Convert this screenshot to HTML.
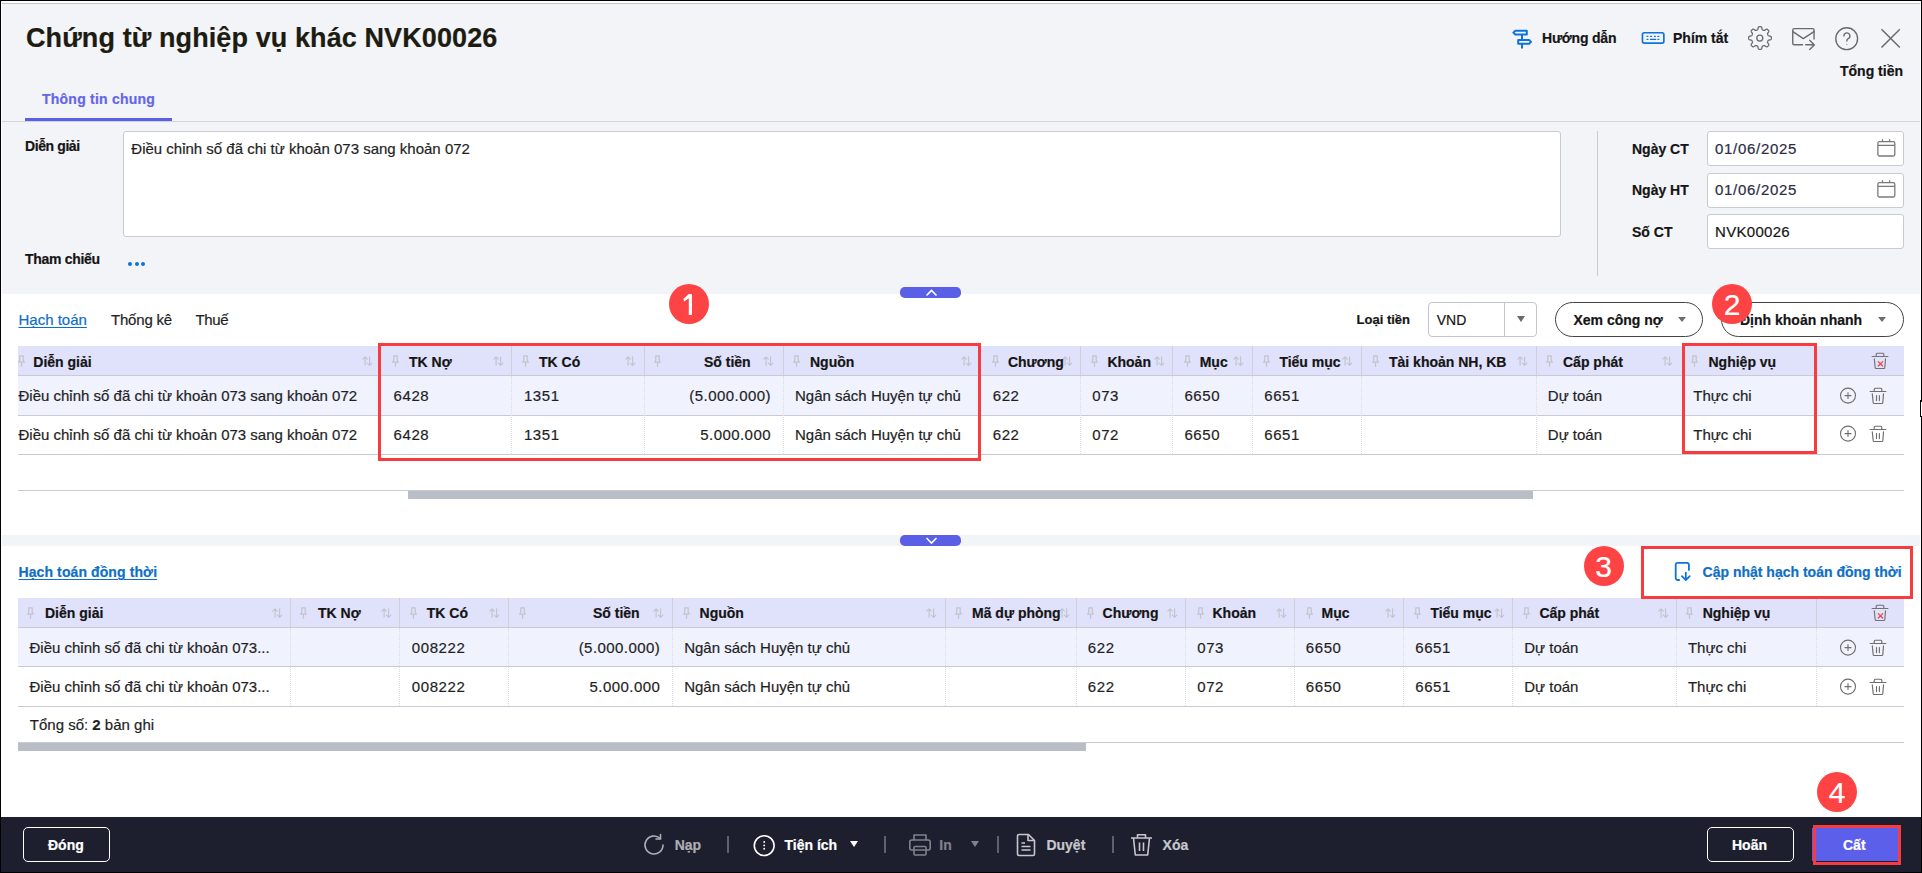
<!DOCTYPE html>
<html><head><meta charset="utf-8"><style>
html,body{margin:0;padding:0;width:1922px;height:873px;overflow:hidden;position:relative;font-family:"Liberation Sans", sans-serif;}
.t{position:absolute;white-space:nowrap;line-height:1;font-family:"Liberation Sans", sans-serif;-webkit-text-stroke:0.2px currentColor;}
svg{display:block}
</style></head><body>
<div style="position:absolute;left:0px;top:0px;width:1922px;height:873px;background:#fff"></div><div style="position:absolute;left:2px;top:4px;width:1918px;height:290px;background:#f3f4f8"></div><div style="position:absolute;left:1px;top:3px;width:1920px;height:1px;background:#c8c8c8"></div><div style="position:absolute;left:2px;top:121px;width:1918px;height:1px;background:#d3d4dc"></div><div style="position:absolute;left:2px;top:535px;width:1918px;height:11px;background:#f3f4f8"></div><div style="position:absolute;left:0px;top:817px;width:1922px;height:56px;background:#1d1f2e"></div><div style="position:absolute;left:0px;top:0px;width:1922px;height:1px;background:#000"></div><div style="position:absolute;left:0px;top:0px;width:1px;height:873px;background:#000"></div><div style="position:absolute;left:1921px;top:0px;width:1px;height:873px;background:#000"></div><div style="position:absolute;left:0px;top:872px;width:1922px;height:1px;background:#000"></div><div class="t" style="left:26.0px;top:25.1px;font-size:27px;font-weight:bold;color:#1c1c12;letter-spacing:0.1px;">Chứng từ nghiệp vụ khác NVK00026</div><svg style="position:absolute;left:1511px;top:28px" width="24" height="22" viewBox="0 0 24 22" fill="none" stroke="#0f74d9" stroke-width="2" stroke-linejoin="round">
<path d="M4.3 2.8H15.8V6.5H4.3L2.4 4.65z"/><path d="M7.2 11.9H18.1L20 13.85 18.1 15.8H7.2z"/><path d="M11 6.5v5.4M11 15.8v4.7"/></svg><div class="t" style="left:1542.0px;top:30.9px;font-size:14px;font-weight:bold;color:#151515;letter-spacing:-0.2px;">Hướng dẫn</div><svg style="position:absolute;left:1640px;top:30px" width="27" height="16" viewBox="0 0 27 16" fill="none" stroke="#0f74d9" stroke-width="1.7" stroke-linecap="round">
<rect x="2.45" y="2.75" width="21.4" height="10.3" rx="1.8"/><path d="M7.1 6.4h.8M10.7 6.4h.8M14.5 6.4h.8M18 6.4h.8M7.1 9.4h.8M18 9.4h.8M10.5 9.4h5.2" stroke-width="1.3"/></svg><div class="t" style="left:1673.0px;top:30.9px;font-size:14px;font-weight:bold;color:#151515;">Phím tắt</div><svg style="position:absolute;left:1747.5px;top:25.5px" width="24" height="24" viewBox="0 0 24 24" fill="none" stroke="#6b6b6b" stroke-width="1.3" stroke-linejoin="round">
<path d="M12.00 0.65 L12.22 0.65 L12.45 0.67 L12.67 0.69 L12.89 0.73 L13.10 0.79 L13.31 0.90 L13.51 1.07 L13.69 1.35 L13.83 1.77 L13.93 2.29 L14.02 2.81 L14.11 3.23 L14.21 3.52 L14.34 3.70 L14.48 3.83 L14.63 3.92 L14.78 4.00 L14.93 4.06 L15.08 4.13 L15.23 4.19 L15.39 4.26 L15.54 4.32 L15.70 4.38 L15.86 4.43 L16.03 4.47 L16.21 4.48 L16.43 4.43 L16.71 4.31 L17.07 4.08 L17.50 3.77 L17.94 3.47 L18.34 3.28 L18.66 3.20 L18.92 3.22 L19.14 3.30 L19.34 3.40 L19.52 3.53 L19.70 3.67 L19.87 3.82 L20.03 3.97 L20.18 4.13 L20.33 4.30 L20.47 4.48 L20.60 4.66 L20.70 4.86 L20.78 5.08 L20.80 5.34 L20.72 5.66 L20.53 6.06 L20.23 6.50 L19.92 6.93 L19.69 7.29 L19.57 7.57 L19.52 7.79 L19.53 7.97 L19.57 8.14 L19.62 8.30 L19.68 8.46 L19.74 8.61 L19.81 8.77 L19.87 8.92 L19.94 9.07 L20.00 9.22 L20.08 9.37 L20.17 9.52 L20.30 9.66 L20.48 9.79 L20.77 9.89 L21.19 9.98 L21.71 10.07 L22.23 10.17 L22.65 10.31 L22.93 10.49 L23.10 10.69 L23.21 10.90 L23.27 11.11 L23.31 11.33 L23.33 11.55 L23.35 11.78 L23.35 12.00 L23.35 12.22 L23.33 12.45 L23.31 12.67 L23.27 12.89 L23.21 13.10 L23.10 13.31 L22.93 13.51 L22.65 13.69 L22.23 13.83 L21.71 13.93 L21.19 14.02 L20.77 14.11 L20.48 14.21 L20.30 14.34 L20.17 14.48 L20.08 14.63 L20.00 14.78 L19.94 14.93 L19.87 15.08 L19.81 15.23 L19.74 15.39 L19.68 15.54 L19.62 15.70 L19.57 15.86 L19.53 16.03 L19.52 16.21 L19.57 16.43 L19.69 16.71 L19.92 17.07 L20.23 17.50 L20.53 17.94 L20.72 18.34 L20.80 18.66 L20.78 18.92 L20.70 19.14 L20.60 19.34 L20.47 19.52 L20.33 19.70 L20.18 19.87 L20.03 20.03 L19.87 20.18 L19.70 20.33 L19.52 20.47 L19.34 20.60 L19.14 20.70 L18.92 20.78 L18.66 20.80 L18.34 20.72 L17.94 20.53 L17.50 20.23 L17.07 19.92 L16.71 19.69 L16.43 19.57 L16.21 19.52 L16.03 19.53 L15.86 19.57 L15.70 19.62 L15.54 19.68 L15.39 19.74 L15.23 19.81 L15.08 19.87 L14.93 19.94 L14.78 20.00 L14.63 20.08 L14.48 20.17 L14.34 20.30 L14.21 20.48 L14.11 20.77 L14.02 21.19 L13.93 21.71 L13.83 22.23 L13.69 22.65 L13.51 22.93 L13.31 23.10 L13.10 23.21 L12.89 23.27 L12.67 23.31 L12.45 23.33 L12.22 23.35 L12.00 23.35 L11.78 23.35 L11.55 23.33 L11.33 23.31 L11.11 23.27 L10.90 23.21 L10.69 23.10 L10.49 22.93 L10.31 22.65 L10.17 22.23 L10.07 21.71 L9.98 21.19 L9.89 20.77 L9.79 20.48 L9.66 20.30 L9.52 20.17 L9.37 20.08 L9.22 20.00 L9.07 19.94 L8.92 19.87 L8.77 19.81 L8.61 19.74 L8.46 19.68 L8.30 19.62 L8.14 19.57 L7.97 19.53 L7.79 19.52 L7.57 19.57 L7.29 19.69 L6.93 19.92 L6.50 20.23 L6.06 20.53 L5.66 20.72 L5.34 20.80 L5.08 20.78 L4.86 20.70 L4.66 20.60 L4.48 20.47 L4.30 20.33 L4.13 20.18 L3.97 20.03 L3.82 19.87 L3.67 19.70 L3.53 19.52 L3.40 19.34 L3.30 19.14 L3.22 18.92 L3.20 18.66 L3.28 18.34 L3.47 17.94 L3.77 17.50 L4.08 17.07 L4.31 16.71 L4.43 16.43 L4.48 16.21 L4.47 16.03 L4.43 15.86 L4.38 15.70 L4.32 15.54 L4.26 15.39 L4.19 15.23 L4.13 15.08 L4.06 14.93 L4.00 14.78 L3.92 14.63 L3.83 14.48 L3.70 14.34 L3.52 14.21 L3.23 14.11 L2.81 14.02 L2.29 13.93 L1.77 13.83 L1.35 13.69 L1.07 13.51 L0.90 13.31 L0.79 13.10 L0.73 12.89 L0.69 12.67 L0.67 12.45 L0.65 12.22 L0.65 12.00 L0.65 11.78 L0.67 11.55 L0.69 11.33 L0.73 11.11 L0.79 10.90 L0.90 10.69 L1.07 10.49 L1.35 10.31 L1.77 10.17 L2.29 10.07 L2.81 9.98 L3.23 9.89 L3.52 9.79 L3.70 9.66 L3.83 9.52 L3.92 9.37 L4.00 9.22 L4.06 9.07 L4.13 8.92 L4.19 8.77 L4.26 8.61 L4.32 8.46 L4.38 8.30 L4.43 8.14 L4.47 7.97 L4.48 7.79 L4.43 7.57 L4.31 7.29 L4.08 6.93 L3.77 6.50 L3.47 6.06 L3.28 5.66 L3.20 5.34 L3.22 5.08 L3.30 4.86 L3.40 4.66 L3.53 4.48 L3.67 4.30 L3.82 4.13 L3.97 3.97 L4.13 3.82 L4.30 3.67 L4.48 3.53 L4.66 3.40 L4.86 3.30 L5.08 3.22 L5.34 3.20 L5.66 3.28 L6.06 3.47 L6.50 3.77 L6.93 4.08 L7.29 4.31 L7.57 4.43 L7.79 4.48 L7.97 4.47 L8.14 4.43 L8.30 4.38 L8.46 4.32 L8.61 4.26 L8.77 4.19 L8.92 4.13 L9.07 4.06 L9.22 4.00 L9.37 3.92 L9.52 3.83 L9.66 3.70 L9.79 3.52 L9.89 3.23 L9.98 2.81 L10.07 2.29 L10.17 1.77 L10.31 1.35 L10.49 1.07 L10.69 0.90 L10.90 0.79 L11.11 0.73 L11.33 0.69 L11.55 0.67 L11.78 0.65Z"/><circle cx="11.8" cy="12.1" r="3"/></svg><svg style="position:absolute;left:1790px;top:26px" width="27" height="26" viewBox="0 0 27 26" fill="none" stroke="#6b6b6b" stroke-width="1.4" stroke-linejoin="round" stroke-linecap="round">
<path d="M12.5 18.75H4.25a1.5 1.5 0 0 1-1.5-1.5V4.15a1.5 1.5 0 0 1 1.5-1.5H22.55a1.5 1.5 0 0 1 1.5 1.5V13"/><path d="M2.9 5.6L13.3 12.6 24 5.6"/><path d="M15.7 18.75H24.3M19.7 14.3L24.3 18.9 19.7 23.5"/></svg><svg style="position:absolute;left:1834px;top:26px" width="25" height="25" viewBox="0 0 25 25" fill="none" stroke="#6b6b6b" stroke-width="1.4" stroke-linecap="round">
<circle cx="12.7" cy="12.7" r="10.9"/><path d="M9.9 9.9a3 3 0 1 1 4.3 2.7c-.8.4-1.3 1-1.3 1.9v.5"/><circle cx="12.9" cy="18.3" r=".55" fill="#6b6b6b" stroke="none"/></svg><svg style="position:absolute;left:1879px;top:27px" width="23" height="23" viewBox="0 0 23 23" fill="none" stroke="#6b6b6b" stroke-width="1.5">
<path d="M2.5 2.2l18.3 18.3M20.8 2.2L2.5 20.5"/></svg><div class="t" style="left:1840.0px;top:64.1px;font-size:14px;font-weight:bold;color:#151515;">Tổng tiền</div><div class="t" style="left:42.0px;top:92.0px;font-size:14px;font-weight:bold;color:#6466e9;letter-spacing:0.23px;">Thông tin chung</div><div style="position:absolute;left:25px;top:118px;width:147px;height:3px;background:#5b5fe6"></div><div class="t" style="left:25.0px;top:138.9px;font-size:14px;font-weight:bold;color:#151515;letter-spacing:-0.4px;">Diễn giải</div><div class="t" style="left:25.0px;top:251.6px;font-size:14px;font-weight:bold;color:#151515;letter-spacing:-0.3px;">Tham chiếu</div><div style="position:absolute;left:123px;top:131px;width:1438px;height:106px;background:#fff;border:1px solid #c9cad2;border-radius:3px;box-sizing:border-box"></div><div class="t" style="left:131.3px;top:140.7px;font-size:15px;color:#1f1f1f;">Điều chỉnh số đã chi từ khoản 073 sang khoản 072</div><div style="position:absolute;left:128.0px;top:262px;width:4px;height:4px;background:#0b74de;border-radius:50%"></div><div style="position:absolute;left:134.5px;top:262px;width:4px;height:4px;background:#0b74de;border-radius:50%"></div><div style="position:absolute;left:141.0px;top:262px;width:4px;height:4px;background:#0b74de;border-radius:50%"></div><div style="position:absolute;left:1597px;top:131px;width:1px;height:145px;background:#c9cad2"></div><div class="t" style="left:1632.0px;top:142.4px;font-size:14px;font-weight:bold;color:#151515;">Ngày CT</div><div style="position:absolute;left:1707px;top:131px;width:197px;height:35px;background:#fff;border:1px solid #c9cad2;border-radius:3px;box-sizing:border-box"></div><div class="t" style="left:1632.0px;top:183.2px;font-size:14px;font-weight:bold;color:#151515;">Ngày HT</div><div style="position:absolute;left:1707px;top:173px;width:197px;height:35px;background:#fff;border:1px solid #c9cad2;border-radius:3px;box-sizing:border-box"></div><div class="t" style="left:1632.0px;top:225.0px;font-size:14px;font-weight:bold;color:#151515;">Số CT</div><div style="position:absolute;left:1707px;top:214px;width:197px;height:35px;background:#fff;border:1px solid #c9cad2;border-radius:3px;box-sizing:border-box"></div><div class="t" style="left:1715.0px;top:141.3px;font-size:15px;color:#2a2d45;letter-spacing:0.7px;">01/06/2025</div><div class="t" style="left:1715.0px;top:182.3px;font-size:15px;color:#2a2d45;letter-spacing:0.7px;">01/06/2025</div><div class="t" style="left:1715.0px;top:224.3px;font-size:15px;color:#151515;letter-spacing:0.3px;">NVK00026</div><svg style="position:absolute;left:1876px;top:139px" width="20" height="19" viewBox="0 0 20 19" fill="none" stroke="#7a7a7a" stroke-width="1.3">
<rect x="1.9" y="2.7" width="16.9" height="14.3" rx="1.5"/><path d="M1.9 6.4h16.9M6.5 0.2v2.8M13.6 0.2v2.8"/></svg><svg style="position:absolute;left:1876px;top:180px" width="20" height="19" viewBox="0 0 20 19" fill="none" stroke="#7a7a7a" stroke-width="1.3">
<rect x="1.9" y="2.7" width="16.9" height="14.3" rx="1.5"/><path d="M1.9 6.4h16.9M6.5 0.2v2.8M13.6 0.2v2.8"/></svg><div style="position:absolute;left:1px;top:1px;width:1920px;height:2px;background:#fff"></div><div style="position:absolute;left:1px;top:1px;width:1px;height:816px;background:#fff"></div><div style="position:absolute;left:1920px;top:1px;width:1px;height:816px;background:#fff"></div><div class="t" style="left:18.5px;top:312.3px;font-size:15px;color:#0f6fc6;text-decoration:underline;text-underline-offset:2px;">Hạch toán</div><div class="t" style="left:111.0px;top:312.3px;font-size:15px;color:#1f1f1f;letter-spacing:-0.2px;">Thống kê</div><div class="t" style="left:195.4px;top:312.3px;font-size:15px;color:#1f1f1f;letter-spacing:-0.3px;">Thuế</div><div class="t" style="left:1356.6px;top:313.3px;font-size:13px;font-weight:bold;color:#151515;">Loại tiền</div><div style="position:absolute;left:1428px;top:302px;width:109px;height:35px;background:#fff;border:1px solid #c4c5cd;border-radius:4px;box-sizing:border-box"></div><div style="position:absolute;left:1504px;top:303px;width:1px;height:33px;background:#c4c5cd"></div><div class="t" style="left:1436.7px;top:312.7px;font-size:14px;color:#151515;">VND</div><div style="position:absolute;left:1517px;top:316px;width:0;height:0;border-left:4.5px solid transparent;border-right:4.5px solid transparent;border-top:6px solid #6a6a6a"></div><div style="position:absolute;left:1555px;top:302px;width:148px;height:35px;background:#fff;border:1.3px solid #444;border-radius:18px;box-sizing:border-box"></div><div class="t" style="left:1573.5px;top:312.7px;font-size:14px;font-weight:bold;color:#151515;">Xem công nợ</div><div style="position:absolute;left:1678px;top:317px;width:0;height:0;border-left:4px solid transparent;border-right:4px solid transparent;border-top:5px solid #6e6e6e"></div><div style="position:absolute;left:1721px;top:302px;width:183px;height:35px;background:#fff;border:1.3px solid #444;border-radius:18px;box-sizing:border-box"></div><div class="t" style="left:1740.0px;top:312.7px;font-size:14px;font-weight:bold;color:#151515;">Định khoản nhanh</div><div style="position:absolute;left:1878px;top:317px;width:0;height:0;border-left:4px solid transparent;border-right:4px solid transparent;border-top:5px solid #6e6e6e"></div><div style="position:absolute;left:18px;top:346px;width:1886px;height:29px;background:#e0e1fa"></div><div style="position:absolute;left:18px;top:375px;width:1886px;height:1px;background:#c9cad3"></div><div style="position:absolute;left:18px;top:376px;width:1886px;height:39px;background:#f0f2fe"></div><div style="position:absolute;left:18px;top:415px;width:1886px;height:1px;background:#c9cad3"></div><div style="position:absolute;left:18px;top:454px;width:1886px;height:1px;background:#c9cad3"></div><div style="position:absolute;left:379px;top:346px;width:1px;height:29px;background:#cfd0da"></div><div style="position:absolute;left:379px;top:376px;width:0;height:78px;border-left:1px dotted #dcdde3"></div><div style="position:absolute;left:511px;top:346px;width:1px;height:29px;background:#cfd0da"></div><div style="position:absolute;left:511px;top:376px;width:0;height:78px;border-left:1px dotted #dcdde3"></div><div style="position:absolute;left:644px;top:346px;width:1px;height:29px;background:#cfd0da"></div><div style="position:absolute;left:644px;top:376px;width:0;height:78px;border-left:1px dotted #dcdde3"></div><div style="position:absolute;left:783px;top:346px;width:1px;height:29px;background:#cfd0da"></div><div style="position:absolute;left:783px;top:376px;width:0;height:78px;border-left:1px dotted #dcdde3"></div><div style="position:absolute;left:980px;top:346px;width:1px;height:29px;background:#cfd0da"></div><div style="position:absolute;left:980px;top:376px;width:0;height:78px;border-left:1px dotted #dcdde3"></div><div style="position:absolute;left:1080px;top:346px;width:1px;height:29px;background:#cfd0da"></div><div style="position:absolute;left:1080px;top:376px;width:0;height:78px;border-left:1px dotted #dcdde3"></div><div style="position:absolute;left:1172px;top:346px;width:1px;height:29px;background:#cfd0da"></div><div style="position:absolute;left:1172px;top:376px;width:0;height:78px;border-left:1px dotted #dcdde3"></div><div style="position:absolute;left:1252px;top:346px;width:1px;height:29px;background:#cfd0da"></div><div style="position:absolute;left:1252px;top:376px;width:0;height:78px;border-left:1px dotted #dcdde3"></div><div style="position:absolute;left:1361px;top:346px;width:1px;height:29px;background:#cfd0da"></div><div style="position:absolute;left:1361px;top:376px;width:0;height:78px;border-left:1px dotted #dcdde3"></div><div style="position:absolute;left:1536px;top:346px;width:1px;height:29px;background:#cfd0da"></div><div style="position:absolute;left:1536px;top:376px;width:0;height:78px;border-left:1px dotted #dcdde3"></div><div style="position:absolute;left:1682px;top:346px;width:1px;height:29px;background:#cfd0da"></div><div style="position:absolute;left:1682px;top:376px;width:0;height:78px;border-left:1px dotted #dcdde3"></div><div style="position:absolute;left:1816px;top:346px;width:1px;height:29px;background:#cfd0da"></div><div style="position:absolute;left:1816px;top:376px;width:0;height:78px;border-left:1px dotted #dcdde3"></div><svg style="position:absolute;left:16px;top:354px" width="11" height="14" viewBox="0 0 11 14" fill="none" stroke="#c2c3cc" stroke-width="1.2" stroke-linejoin="round"><path d="M3.8 1.8H7.2V6.3L8.3 8.2H2.7L3.8 6.3z"/><path d="M5.5 8.2V12.7"/></svg><svg style="position:absolute;left:362px;top:356px" width="12" height="10" viewBox="0 0 12 10" fill="none" stroke="#c2c3cc" stroke-width="1.1" stroke-linecap="round" stroke-linejoin="round"><path d="M3.1 9.3V0.8M0.85 3.05L3.1 0.8 5.35 3.05M7.6 0.8V9.3M5.35 7.05L7.6 9.3 9.85 7.05"/></svg><div class="t" style="left:33.3px;top:354.9px;font-size:14px;font-weight:bold;color:#151515;">Diễn giải</div><svg style="position:absolute;left:390px;top:354px" width="11" height="14" viewBox="0 0 11 14" fill="none" stroke="#c2c3cc" stroke-width="1.2" stroke-linejoin="round"><path d="M3.8 1.8H7.2V6.3L8.3 8.2H2.7L3.8 6.3z"/><path d="M5.5 8.2V12.7"/></svg><svg style="position:absolute;left:493px;top:356px" width="12" height="10" viewBox="0 0 12 10" fill="none" stroke="#c2c3cc" stroke-width="1.1" stroke-linecap="round" stroke-linejoin="round"><path d="M3.1 9.3V0.8M0.85 3.05L3.1 0.8 5.35 3.05M7.6 0.8V9.3M5.35 7.05L7.6 9.3 9.85 7.05"/></svg><div class="t" style="left:409.0px;top:354.9px;font-size:14px;font-weight:bold;color:#151515;">TK Nợ</div><svg style="position:absolute;left:520px;top:354px" width="11" height="14" viewBox="0 0 11 14" fill="none" stroke="#c2c3cc" stroke-width="1.2" stroke-linejoin="round"><path d="M3.8 1.8H7.2V6.3L8.3 8.2H2.7L3.8 6.3z"/><path d="M5.5 8.2V12.7"/></svg><svg style="position:absolute;left:625px;top:356px" width="12" height="10" viewBox="0 0 12 10" fill="none" stroke="#c2c3cc" stroke-width="1.1" stroke-linecap="round" stroke-linejoin="round"><path d="M3.1 9.3V0.8M0.85 3.05L3.1 0.8 5.35 3.05M7.6 0.8V9.3M5.35 7.05L7.6 9.3 9.85 7.05"/></svg><div class="t" style="left:539.0px;top:354.9px;font-size:14px;font-weight:bold;color:#151515;">TK Có</div><svg style="position:absolute;left:652px;top:354px" width="11" height="14" viewBox="0 0 11 14" fill="none" stroke="#c2c3cc" stroke-width="1.2" stroke-linejoin="round"><path d="M3.8 1.8H7.2V6.3L8.3 8.2H2.7L3.8 6.3z"/><path d="M5.5 8.2V12.7"/></svg><svg style="position:absolute;left:763px;top:356px" width="12" height="10" viewBox="0 0 12 10" fill="none" stroke="#c2c3cc" stroke-width="1.1" stroke-linecap="round" stroke-linejoin="round"><path d="M3.1 9.3V0.8M0.85 3.05L3.1 0.8 5.35 3.05M7.6 0.8V9.3M5.35 7.05L7.6 9.3 9.85 7.05"/></svg><div class="t" style="right:1171.4px;top:354.9px;font-size:14px;font-weight:bold;color:#151515;">Số tiền</div><svg style="position:absolute;left:791px;top:354px" width="11" height="14" viewBox="0 0 11 14" fill="none" stroke="#c2c3cc" stroke-width="1.2" stroke-linejoin="round"><path d="M3.8 1.8H7.2V6.3L8.3 8.2H2.7L3.8 6.3z"/><path d="M5.5 8.2V12.7"/></svg><svg style="position:absolute;left:961px;top:356px" width="12" height="10" viewBox="0 0 12 10" fill="none" stroke="#c2c3cc" stroke-width="1.1" stroke-linecap="round" stroke-linejoin="round"><path d="M3.1 9.3V0.8M0.85 3.05L3.1 0.8 5.35 3.05M7.6 0.8V9.3M5.35 7.05L7.6 9.3 9.85 7.05"/></svg><div class="t" style="left:810.0px;top:354.9px;font-size:14px;font-weight:bold;color:#151515;">Nguồn</div><svg style="position:absolute;left:990px;top:354px" width="11" height="14" viewBox="0 0 11 14" fill="none" stroke="#c2c3cc" stroke-width="1.2" stroke-linejoin="round"><path d="M3.8 1.8H7.2V6.3L8.3 8.2H2.7L3.8 6.3z"/><path d="M5.5 8.2V12.7"/></svg><svg style="position:absolute;left:1062px;top:356px" width="12" height="10" viewBox="0 0 12 10" fill="none" stroke="#c2c3cc" stroke-width="1.1" stroke-linecap="round" stroke-linejoin="round"><path d="M3.1 9.3V0.8M0.85 3.05L3.1 0.8 5.35 3.05M7.6 0.8V9.3M5.35 7.05L7.6 9.3 9.85 7.05"/></svg><div class="t" style="left:1007.9px;top:354.9px;font-size:14px;font-weight:bold;color:#151515;">Chương</div><svg style="position:absolute;left:1089px;top:354px" width="11" height="14" viewBox="0 0 11 14" fill="none" stroke="#c2c3cc" stroke-width="1.2" stroke-linejoin="round"><path d="M3.8 1.8H7.2V6.3L8.3 8.2H2.7L3.8 6.3z"/><path d="M5.5 8.2V12.7"/></svg><svg style="position:absolute;left:1154px;top:356px" width="12" height="10" viewBox="0 0 12 10" fill="none" stroke="#c2c3cc" stroke-width="1.1" stroke-linecap="round" stroke-linejoin="round"><path d="M3.1 9.3V0.8M0.85 3.05L3.1 0.8 5.35 3.05M7.6 0.8V9.3M5.35 7.05L7.6 9.3 9.85 7.05"/></svg><div class="t" style="left:1107.4px;top:354.9px;font-size:14px;font-weight:bold;color:#151515;">Khoản</div><svg style="position:absolute;left:1182px;top:354px" width="11" height="14" viewBox="0 0 11 14" fill="none" stroke="#c2c3cc" stroke-width="1.2" stroke-linejoin="round"><path d="M3.8 1.8H7.2V6.3L8.3 8.2H2.7L3.8 6.3z"/><path d="M5.5 8.2V12.7"/></svg><svg style="position:absolute;left:1233px;top:356px" width="12" height="10" viewBox="0 0 12 10" fill="none" stroke="#c2c3cc" stroke-width="1.1" stroke-linecap="round" stroke-linejoin="round"><path d="M3.1 9.3V0.8M0.85 3.05L3.1 0.8 5.35 3.05M7.6 0.8V9.3M5.35 7.05L7.6 9.3 9.85 7.05"/></svg><div class="t" style="left:1199.7px;top:354.9px;font-size:14px;font-weight:bold;color:#151515;">Mục</div><svg style="position:absolute;left:1261px;top:354px" width="11" height="14" viewBox="0 0 11 14" fill="none" stroke="#c2c3cc" stroke-width="1.2" stroke-linejoin="round"><path d="M3.8 1.8H7.2V6.3L8.3 8.2H2.7L3.8 6.3z"/><path d="M5.5 8.2V12.7"/></svg><svg style="position:absolute;left:1342px;top:356px" width="12" height="10" viewBox="0 0 12 10" fill="none" stroke="#c2c3cc" stroke-width="1.1" stroke-linecap="round" stroke-linejoin="round"><path d="M3.1 9.3V0.8M0.85 3.05L3.1 0.8 5.35 3.05M7.6 0.8V9.3M5.35 7.05L7.6 9.3 9.85 7.05"/></svg><div class="t" style="left:1279.4px;top:354.9px;font-size:14px;font-weight:bold;color:#151515;">Tiểu mục</div><svg style="position:absolute;left:1370px;top:354px" width="11" height="14" viewBox="0 0 11 14" fill="none" stroke="#c2c3cc" stroke-width="1.2" stroke-linejoin="round"><path d="M3.8 1.8H7.2V6.3L8.3 8.2H2.7L3.8 6.3z"/><path d="M5.5 8.2V12.7"/></svg><svg style="position:absolute;left:1517px;top:356px" width="12" height="10" viewBox="0 0 12 10" fill="none" stroke="#c2c3cc" stroke-width="1.1" stroke-linecap="round" stroke-linejoin="round"><path d="M3.1 9.3V0.8M0.85 3.05L3.1 0.8 5.35 3.05M7.6 0.8V9.3M5.35 7.05L7.6 9.3 9.85 7.05"/></svg><div class="t" style="left:1389.0px;top:354.9px;font-size:14px;font-weight:bold;color:#151515;">Tài khoản NH, KB</div><svg style="position:absolute;left:1544px;top:354px" width="11" height="14" viewBox="0 0 11 14" fill="none" stroke="#c2c3cc" stroke-width="1.2" stroke-linejoin="round"><path d="M3.8 1.8H7.2V6.3L8.3 8.2H2.7L3.8 6.3z"/><path d="M5.5 8.2V12.7"/></svg><svg style="position:absolute;left:1662px;top:356px" width="12" height="10" viewBox="0 0 12 10" fill="none" stroke="#c2c3cc" stroke-width="1.1" stroke-linecap="round" stroke-linejoin="round"><path d="M3.1 9.3V0.8M0.85 3.05L3.1 0.8 5.35 3.05M7.6 0.8V9.3M5.35 7.05L7.6 9.3 9.85 7.05"/></svg><div class="t" style="left:1563.0px;top:354.9px;font-size:14px;font-weight:bold;color:#151515;">Cấp phát</div><svg style="position:absolute;left:1689px;top:354px" width="11" height="14" viewBox="0 0 11 14" fill="none" stroke="#c2c3cc" stroke-width="1.2" stroke-linejoin="round"><path d="M3.8 1.8H7.2V6.3L8.3 8.2H2.7L3.8 6.3z"/><path d="M5.5 8.2V12.7"/></svg><div class="t" style="left:1708.5px;top:354.9px;font-size:14px;font-weight:bold;color:#151515;">Nghiệp vụ</div><svg style="position:absolute;left:1871px;top:352px" width="18" height="19" viewBox="0 0 18 19" fill="none" stroke="#727272" stroke-width="1.15" stroke-linejoin="round" stroke-linecap="round"><path d="M1.1 4.5H16.9M5.2 4.5V2.2a1 1 0 0 1 1-1H11.8a1 1 0 0 1 1 1V4.5M3.3 6.9L4.2 15.8a.8.8 0 0 0 .8.7H13a.8.8 0 0 0 .8-.7L14.5 6.9"/><path d="M7.3 9.6l4.4 4.4M11.7 9.6l-4.4 4.4" stroke="#f04646" stroke-width="1.3" stroke-linecap="round"/></svg><div class="t" style="left:18.5px;top:388.1px;font-size:15px;color:#1f1f1f;">Điều chỉnh số đã chi từ khoản 073 sang khoản 072</div><div class="t" style="left:393.5px;top:388.1px;font-size:15px;color:#1f1f1f;letter-spacing:0.6px;">6428</div><div class="t" style="left:523.9px;top:388.1px;font-size:15px;color:#1f1f1f;letter-spacing:0.6px;">1351</div><div class="t" style="right:1151.0px;top:388.1px;font-size:15px;color:#1f1f1f;letter-spacing:0.45px;">(5.000.000)</div><div class="t" style="left:795.0px;top:388.1px;font-size:15px;color:#1f1f1f;">Ngân sách Huyện tự chủ</div><div class="t" style="left:992.7px;top:388.1px;font-size:15px;color:#1f1f1f;letter-spacing:0.6px;">622</div><div class="t" style="left:1092.2px;top:388.1px;font-size:15px;color:#1f1f1f;letter-spacing:0.6px;">073</div><div class="t" style="left:1184.4px;top:388.1px;font-size:15px;color:#1f1f1f;letter-spacing:0.6px;">6650</div><div class="t" style="left:1264.2px;top:388.1px;font-size:15px;color:#1f1f1f;letter-spacing:0.6px;">6651</div><div class="t" style="left:1547.8px;top:388.1px;font-size:15px;color:#1f1f1f;">Dự toán</div><div class="t" style="left:1693.3px;top:388.1px;font-size:15px;color:#1f1f1f;">Thực chi</div><svg style="position:absolute;left:1839px;top:387px" width="18" height="18" viewBox="0 0 18 18" fill="none" stroke="#6e6e6e" stroke-width="1.1"><circle cx="9" cy="8.6" r="7.5"/><path d="M9 5.2v6.7M5.6 8.6h6.8"/></svg><svg style="position:absolute;left:1869px;top:387px" width="18" height="19" viewBox="0 0 18 19" fill="none" stroke="#6e6e6e" stroke-width="1.15" stroke-linejoin="round" stroke-linecap="round"><path d="M1.1 4.5H16.9M5.2 4.5V2.2a1 1 0 0 1 1-1H11.8a1 1 0 0 1 1 1V4.5M3.3 6.9L4.2 15.8a.8.8 0 0 0 .8.7H13a.8.8 0 0 0 .8-.7L14.5 6.9"/><path d="M7.5 8.6V13.6M10.4 8.6V13.6"/></svg><div class="t" style="left:18.5px;top:426.6px;font-size:15px;color:#1f1f1f;">Điều chỉnh số đã chi từ khoản 073 sang khoản 072</div><div class="t" style="left:393.5px;top:426.6px;font-size:15px;color:#1f1f1f;letter-spacing:0.6px;">6428</div><div class="t" style="left:523.9px;top:426.6px;font-size:15px;color:#1f1f1f;letter-spacing:0.6px;">1351</div><div class="t" style="right:1151.0px;top:426.6px;font-size:15px;color:#1f1f1f;letter-spacing:0.45px;">5.000.000</div><div class="t" style="left:795.0px;top:426.6px;font-size:15px;color:#1f1f1f;">Ngân sách Huyện tự chủ</div><div class="t" style="left:992.7px;top:426.6px;font-size:15px;color:#1f1f1f;letter-spacing:0.6px;">622</div><div class="t" style="left:1092.2px;top:426.6px;font-size:15px;color:#1f1f1f;letter-spacing:0.6px;">072</div><div class="t" style="left:1184.4px;top:426.6px;font-size:15px;color:#1f1f1f;letter-spacing:0.6px;">6650</div><div class="t" style="left:1264.2px;top:426.6px;font-size:15px;color:#1f1f1f;letter-spacing:0.6px;">6651</div><div class="t" style="left:1547.8px;top:426.6px;font-size:15px;color:#1f1f1f;">Dự toán</div><div class="t" style="left:1693.3px;top:426.6px;font-size:15px;color:#1f1f1f;">Thực chi</div><svg style="position:absolute;left:1839px;top:425px" width="18" height="18" viewBox="0 0 18 18" fill="none" stroke="#6e6e6e" stroke-width="1.1"><circle cx="9" cy="8.6" r="7.5"/><path d="M9 5.2v6.7M5.6 8.6h6.8"/></svg><svg style="position:absolute;left:1869px;top:425px" width="18" height="19" viewBox="0 0 18 19" fill="none" stroke="#6e6e6e" stroke-width="1.15" stroke-linejoin="round" stroke-linecap="round"><path d="M1.1 4.5H16.9M5.2 4.5V2.2a1 1 0 0 1 1-1H11.8a1 1 0 0 1 1 1V4.5M3.3 6.9L4.2 15.8a.8.8 0 0 0 .8.7H13a.8.8 0 0 0 .8-.7L14.5 6.9"/><path d="M7.5 8.6V13.6M10.4 8.6V13.6"/></svg><div style="position:absolute;left:18px;top:490px;width:1886px;height:1px;background:#c9cad3"></div><div style="position:absolute;left:408px;top:491px;width:1125px;height:8px;background:#b9bdc6"></div><svg style="position:absolute;left:900px;top:287px" width="61" height="11" viewBox="-30.5 -5.5 61 11"><rect x="-30.5" y="-5.5" width="61" height="11" rx="4.8" fill="#5b5fe6"/><path d="M-4 3l5-5 5 5" stroke="#fff" stroke-width="1.6" fill="none"/></svg><svg style="position:absolute;left:900px;top:535px" width="61" height="11" viewBox="-30.5 -5.5 61 11"><rect x="-30.5" y="-5.5" width="61" height="11" rx="4.8" fill="#5b5fe6"/><path d="M-4 -2.5l5 5 5-5" stroke="#fff" stroke-width="1.6" fill="none"/></svg><div class="t" style="left:18.5px;top:565.1px;font-size:14px;font-weight:bold;color:#0f6fc6;letter-spacing:0.1px;text-decoration:underline;text-underline-offset:2px;">Hạch toán đồng thời</div><svg style="position:absolute;left:1672px;top:560px" width="21" height="22" viewBox="0 0 21 22" fill="none" stroke="#0f74d9" stroke-width="1.8" stroke-linecap="round" stroke-linejoin="round"><path d="M7.2 20H5.7a2 2 0 0 1-2-2V4.9a2 2 0 0 1 2-2H14.9a2 2 0 0 1 2 2V9.9"/><path d="M13.8 12.6V20.1M9.9 16.2L13.8 20.1 17.7 16.2"/></svg><div class="t" style="left:1702.6px;top:565.3px;font-size:14px;font-weight:bold;color:#0f6fc6;">Cập nhật hạch toán đồng thời</div><div style="position:absolute;left:18px;top:598px;width:1886px;height:29px;background:#e0e1fa"></div><div style="position:absolute;left:18px;top:627px;width:1886px;height:1px;background:#c9cad3"></div><div style="position:absolute;left:18px;top:628px;width:1886px;height:38px;background:#f0f2fe"></div><div style="position:absolute;left:18px;top:666px;width:1886px;height:1px;background:#c9cad3"></div><div style="position:absolute;left:18px;top:706px;width:1886px;height:1px;background:#c9cad3"></div><div style="position:absolute;left:290px;top:598px;width:1px;height:29px;background:#cfd0da"></div><div style="position:absolute;left:290px;top:628px;width:0;height:78px;border-left:1px dotted #dcdde3"></div><div style="position:absolute;left:399px;top:598px;width:1px;height:29px;background:#cfd0da"></div><div style="position:absolute;left:399px;top:628px;width:0;height:78px;border-left:1px dotted #dcdde3"></div><div style="position:absolute;left:508px;top:598px;width:1px;height:29px;background:#cfd0da"></div><div style="position:absolute;left:508px;top:628px;width:0;height:78px;border-left:1px dotted #dcdde3"></div><div style="position:absolute;left:672px;top:598px;width:1px;height:29px;background:#cfd0da"></div><div style="position:absolute;left:672px;top:628px;width:0;height:78px;border-left:1px dotted #dcdde3"></div><div style="position:absolute;left:945px;top:598px;width:1px;height:29px;background:#cfd0da"></div><div style="position:absolute;left:945px;top:628px;width:0;height:78px;border-left:1px dotted #dcdde3"></div><div style="position:absolute;left:1076px;top:598px;width:1px;height:29px;background:#cfd0da"></div><div style="position:absolute;left:1076px;top:628px;width:0;height:78px;border-left:1px dotted #dcdde3"></div><div style="position:absolute;left:1185px;top:598px;width:1px;height:29px;background:#cfd0da"></div><div style="position:absolute;left:1185px;top:628px;width:0;height:78px;border-left:1px dotted #dcdde3"></div><div style="position:absolute;left:1294px;top:598px;width:1px;height:29px;background:#cfd0da"></div><div style="position:absolute;left:1294px;top:628px;width:0;height:78px;border-left:1px dotted #dcdde3"></div><div style="position:absolute;left:1403px;top:598px;width:1px;height:29px;background:#cfd0da"></div><div style="position:absolute;left:1403px;top:628px;width:0;height:78px;border-left:1px dotted #dcdde3"></div><div style="position:absolute;left:1512px;top:598px;width:1px;height:29px;background:#cfd0da"></div><div style="position:absolute;left:1512px;top:628px;width:0;height:78px;border-left:1px dotted #dcdde3"></div><div style="position:absolute;left:1676px;top:598px;width:1px;height:29px;background:#cfd0da"></div><div style="position:absolute;left:1676px;top:628px;width:0;height:78px;border-left:1px dotted #dcdde3"></div><div style="position:absolute;left:1816px;top:598px;width:1px;height:29px;background:#cfd0da"></div><div style="position:absolute;left:1816px;top:628px;width:0;height:78px;border-left:1px dotted #dcdde3"></div><svg style="position:absolute;left:25px;top:606px" width="11" height="14" viewBox="0 0 11 14" fill="none" stroke="#c2c3cc" stroke-width="1.2" stroke-linejoin="round"><path d="M3.8 1.8H7.2V6.3L8.3 8.2H2.7L3.8 6.3z"/><path d="M5.5 8.2V12.7"/></svg><svg style="position:absolute;left:272px;top:608px" width="12" height="10" viewBox="0 0 12 10" fill="none" stroke="#c2c3cc" stroke-width="1.1" stroke-linecap="round" stroke-linejoin="round"><path d="M3.1 9.3V0.8M0.85 3.05L3.1 0.8 5.35 3.05M7.6 0.8V9.3M5.35 7.05L7.6 9.3 9.85 7.05"/></svg><div class="t" style="left:45.0px;top:606.3px;font-size:14px;font-weight:bold;color:#151515;">Diễn giải</div><svg style="position:absolute;left:298px;top:606px" width="11" height="14" viewBox="0 0 11 14" fill="none" stroke="#c2c3cc" stroke-width="1.2" stroke-linejoin="round"><path d="M3.8 1.8H7.2V6.3L8.3 8.2H2.7L3.8 6.3z"/><path d="M5.5 8.2V12.7"/></svg><svg style="position:absolute;left:381px;top:608px" width="12" height="10" viewBox="0 0 12 10" fill="none" stroke="#c2c3cc" stroke-width="1.1" stroke-linecap="round" stroke-linejoin="round"><path d="M3.1 9.3V0.8M0.85 3.05L3.1 0.8 5.35 3.05M7.6 0.8V9.3M5.35 7.05L7.6 9.3 9.85 7.05"/></svg><div class="t" style="left:318.0px;top:606.3px;font-size:14px;font-weight:bold;color:#151515;">TK Nợ</div><svg style="position:absolute;left:408px;top:606px" width="11" height="14" viewBox="0 0 11 14" fill="none" stroke="#c2c3cc" stroke-width="1.2" stroke-linejoin="round"><path d="M3.8 1.8H7.2V6.3L8.3 8.2H2.7L3.8 6.3z"/><path d="M5.5 8.2V12.7"/></svg><svg style="position:absolute;left:489px;top:608px" width="12" height="10" viewBox="0 0 12 10" fill="none" stroke="#c2c3cc" stroke-width="1.1" stroke-linecap="round" stroke-linejoin="round"><path d="M3.1 9.3V0.8M0.85 3.05L3.1 0.8 5.35 3.05M7.6 0.8V9.3M5.35 7.05L7.6 9.3 9.85 7.05"/></svg><div class="t" style="left:426.8px;top:606.3px;font-size:14px;font-weight:bold;color:#151515;">TK Có</div><svg style="position:absolute;left:517px;top:606px" width="11" height="14" viewBox="0 0 11 14" fill="none" stroke="#c2c3cc" stroke-width="1.2" stroke-linejoin="round"><path d="M3.8 1.8H7.2V6.3L8.3 8.2H2.7L3.8 6.3z"/><path d="M5.5 8.2V12.7"/></svg><svg style="position:absolute;left:653px;top:608px" width="12" height="10" viewBox="0 0 12 10" fill="none" stroke="#c2c3cc" stroke-width="1.1" stroke-linecap="round" stroke-linejoin="round"><path d="M3.1 9.3V0.8M0.85 3.05L3.1 0.8 5.35 3.05M7.6 0.8V9.3M5.35 7.05L7.6 9.3 9.85 7.05"/></svg><div class="t" style="right:1282.4px;top:606.3px;font-size:14px;font-weight:bold;color:#151515;">Số tiền</div><svg style="position:absolute;left:681px;top:606px" width="11" height="14" viewBox="0 0 11 14" fill="none" stroke="#c2c3cc" stroke-width="1.2" stroke-linejoin="round"><path d="M3.8 1.8H7.2V6.3L8.3 8.2H2.7L3.8 6.3z"/><path d="M5.5 8.2V12.7"/></svg><svg style="position:absolute;left:926px;top:608px" width="12" height="10" viewBox="0 0 12 10" fill="none" stroke="#c2c3cc" stroke-width="1.1" stroke-linecap="round" stroke-linejoin="round"><path d="M3.1 9.3V0.8M0.85 3.05L3.1 0.8 5.35 3.05M7.6 0.8V9.3M5.35 7.05L7.6 9.3 9.85 7.05"/></svg><div class="t" style="left:699.6px;top:606.3px;font-size:14px;font-weight:bold;color:#151515;">Nguồn</div><svg style="position:absolute;left:953px;top:606px" width="11" height="14" viewBox="0 0 11 14" fill="none" stroke="#c2c3cc" stroke-width="1.2" stroke-linejoin="round"><path d="M3.8 1.8H7.2V6.3L8.3 8.2H2.7L3.8 6.3z"/><path d="M5.5 8.2V12.7"/></svg><svg style="position:absolute;left:1059px;top:608px" width="12" height="10" viewBox="0 0 12 10" fill="none" stroke="#c2c3cc" stroke-width="1.1" stroke-linecap="round" stroke-linejoin="round"><path d="M3.1 9.3V0.8M0.85 3.05L3.1 0.8 5.35 3.05M7.6 0.8V9.3M5.35 7.05L7.6 9.3 9.85 7.05"/></svg><div class="t" style="left:972.0px;top:606.3px;font-size:14px;font-weight:bold;color:#151515;">Mã dự phòng</div><svg style="position:absolute;left:1085px;top:606px" width="11" height="14" viewBox="0 0 11 14" fill="none" stroke="#c2c3cc" stroke-width="1.2" stroke-linejoin="round"><path d="M3.8 1.8H7.2V6.3L8.3 8.2H2.7L3.8 6.3z"/><path d="M5.5 8.2V12.7"/></svg><svg style="position:absolute;left:1167px;top:608px" width="12" height="10" viewBox="0 0 12 10" fill="none" stroke="#c2c3cc" stroke-width="1.1" stroke-linecap="round" stroke-linejoin="round"><path d="M3.1 9.3V0.8M0.85 3.05L3.1 0.8 5.35 3.05M7.6 0.8V9.3M5.35 7.05L7.6 9.3 9.85 7.05"/></svg><div class="t" style="left:1102.6px;top:606.3px;font-size:14px;font-weight:bold;color:#151515;">Chương</div><svg style="position:absolute;left:1195px;top:606px" width="11" height="14" viewBox="0 0 11 14" fill="none" stroke="#c2c3cc" stroke-width="1.2" stroke-linejoin="round"><path d="M3.8 1.8H7.2V6.3L8.3 8.2H2.7L3.8 6.3z"/><path d="M5.5 8.2V12.7"/></svg><svg style="position:absolute;left:1276px;top:608px" width="12" height="10" viewBox="0 0 12 10" fill="none" stroke="#c2c3cc" stroke-width="1.1" stroke-linecap="round" stroke-linejoin="round"><path d="M3.1 9.3V0.8M0.85 3.05L3.1 0.8 5.35 3.05M7.6 0.8V9.3M5.35 7.05L7.6 9.3 9.85 7.05"/></svg><div class="t" style="left:1212.5px;top:606.3px;font-size:14px;font-weight:bold;color:#151515;">Khoản</div><svg style="position:absolute;left:1304px;top:606px" width="11" height="14" viewBox="0 0 11 14" fill="none" stroke="#c2c3cc" stroke-width="1.2" stroke-linejoin="round"><path d="M3.8 1.8H7.2V6.3L8.3 8.2H2.7L3.8 6.3z"/><path d="M5.5 8.2V12.7"/></svg><svg style="position:absolute;left:1385px;top:608px" width="12" height="10" viewBox="0 0 12 10" fill="none" stroke="#c2c3cc" stroke-width="1.1" stroke-linecap="round" stroke-linejoin="round"><path d="M3.1 9.3V0.8M0.85 3.05L3.1 0.8 5.35 3.05M7.6 0.8V9.3M5.35 7.05L7.6 9.3 9.85 7.05"/></svg><div class="t" style="left:1321.5px;top:606.3px;font-size:14px;font-weight:bold;color:#151515;">Mục</div><svg style="position:absolute;left:1412px;top:606px" width="11" height="14" viewBox="0 0 11 14" fill="none" stroke="#c2c3cc" stroke-width="1.2" stroke-linejoin="round"><path d="M3.8 1.8H7.2V6.3L8.3 8.2H2.7L3.8 6.3z"/><path d="M5.5 8.2V12.7"/></svg><svg style="position:absolute;left:1494px;top:608px" width="12" height="10" viewBox="0 0 12 10" fill="none" stroke="#c2c3cc" stroke-width="1.1" stroke-linecap="round" stroke-linejoin="round"><path d="M3.1 9.3V0.8M0.85 3.05L3.1 0.8 5.35 3.05M7.6 0.8V9.3M5.35 7.05L7.6 9.3 9.85 7.05"/></svg><div class="t" style="left:1430.4px;top:606.3px;font-size:14px;font-weight:bold;color:#151515;">Tiểu mục</div><svg style="position:absolute;left:1521px;top:606px" width="11" height="14" viewBox="0 0 11 14" fill="none" stroke="#c2c3cc" stroke-width="1.2" stroke-linejoin="round"><path d="M3.8 1.8H7.2V6.3L8.3 8.2H2.7L3.8 6.3z"/><path d="M5.5 8.2V12.7"/></svg><svg style="position:absolute;left:1658px;top:608px" width="12" height="10" viewBox="0 0 12 10" fill="none" stroke="#c2c3cc" stroke-width="1.1" stroke-linecap="round" stroke-linejoin="round"><path d="M3.1 9.3V0.8M0.85 3.05L3.1 0.8 5.35 3.05M7.6 0.8V9.3M5.35 7.05L7.6 9.3 9.85 7.05"/></svg><div class="t" style="left:1539.4px;top:606.3px;font-size:14px;font-weight:bold;color:#151515;">Cấp phát</div><svg style="position:absolute;left:1684px;top:606px" width="11" height="14" viewBox="0 0 11 14" fill="none" stroke="#c2c3cc" stroke-width="1.2" stroke-linejoin="round"><path d="M3.8 1.8H7.2V6.3L8.3 8.2H2.7L3.8 6.3z"/><path d="M5.5 8.2V12.7"/></svg><div class="t" style="left:1702.7px;top:606.3px;font-size:14px;font-weight:bold;color:#151515;">Nghiệp vụ</div><svg style="position:absolute;left:1871px;top:604px" width="18" height="19" viewBox="0 0 18 19" fill="none" stroke="#727272" stroke-width="1.15" stroke-linejoin="round" stroke-linecap="round"><path d="M1.1 4.5H16.9M5.2 4.5V2.2a1 1 0 0 1 1-1H11.8a1 1 0 0 1 1 1V4.5M3.3 6.9L4.2 15.8a.8.8 0 0 0 .8.7H13a.8.8 0 0 0 .8-.7L14.5 6.9"/><path d="M7.3 9.6l4.4 4.4M11.7 9.6l-4.4 4.4" stroke="#f04646" stroke-width="1.3" stroke-linecap="round"/></svg><div class="t" style="left:29.5px;top:640.1px;font-size:15px;color:#1f1f1f;">Điều chỉnh số đã chi từ khoản 073...</div><div class="t" style="left:411.8px;top:640.1px;font-size:15px;color:#1f1f1f;letter-spacing:0.6px;">008222</div><div class="t" style="right:1261.7px;top:640.1px;font-size:15px;color:#1f1f1f;letter-spacing:0.45px;">(5.000.000)</div><div class="t" style="left:684.2px;top:640.1px;font-size:15px;color:#1f1f1f;">Ngân sách Huyện tự chủ</div><div class="t" style="left:1087.8px;top:640.1px;font-size:15px;color:#1f1f1f;letter-spacing:0.6px;">622</div><div class="t" style="left:1197.2px;top:640.1px;font-size:15px;color:#1f1f1f;letter-spacing:0.6px;">073</div><div class="t" style="left:1305.8px;top:640.1px;font-size:15px;color:#1f1f1f;letter-spacing:0.6px;">6650</div><div class="t" style="left:1415.2px;top:640.1px;font-size:15px;color:#1f1f1f;letter-spacing:0.6px;">6651</div><div class="t" style="left:1524.2px;top:640.1px;font-size:15px;color:#1f1f1f;">Dự toán</div><div class="t" style="left:1687.9px;top:640.1px;font-size:15px;color:#1f1f1f;">Thực chi</div><svg style="position:absolute;left:1839px;top:639px" width="18" height="18" viewBox="0 0 18 18" fill="none" stroke="#6e6e6e" stroke-width="1.1"><circle cx="9" cy="8.6" r="7.5"/><path d="M9 5.2v6.7M5.6 8.6h6.8"/></svg><svg style="position:absolute;left:1869px;top:639px" width="18" height="19" viewBox="0 0 18 19" fill="none" stroke="#6e6e6e" stroke-width="1.15" stroke-linejoin="round" stroke-linecap="round"><path d="M1.1 4.5H16.9M5.2 4.5V2.2a1 1 0 0 1 1-1H11.8a1 1 0 0 1 1 1V4.5M3.3 6.9L4.2 15.8a.8.8 0 0 0 .8.7H13a.8.8 0 0 0 .8-.7L14.5 6.9"/><path d="M7.5 8.6V13.6M10.4 8.6V13.6"/></svg><div class="t" style="left:29.5px;top:679.3px;font-size:15px;color:#1f1f1f;">Điều chỉnh số đã chi từ khoản 073...</div><div class="t" style="left:411.8px;top:679.3px;font-size:15px;color:#1f1f1f;letter-spacing:0.6px;">008222</div><div class="t" style="right:1261.7px;top:679.3px;font-size:15px;color:#1f1f1f;letter-spacing:0.45px;">5.000.000</div><div class="t" style="left:684.2px;top:679.3px;font-size:15px;color:#1f1f1f;">Ngân sách Huyện tự chủ</div><div class="t" style="left:1087.8px;top:679.3px;font-size:15px;color:#1f1f1f;letter-spacing:0.6px;">622</div><div class="t" style="left:1197.2px;top:679.3px;font-size:15px;color:#1f1f1f;letter-spacing:0.6px;">072</div><div class="t" style="left:1305.8px;top:679.3px;font-size:15px;color:#1f1f1f;letter-spacing:0.6px;">6650</div><div class="t" style="left:1415.2px;top:679.3px;font-size:15px;color:#1f1f1f;letter-spacing:0.6px;">6651</div><div class="t" style="left:1524.2px;top:679.3px;font-size:15px;color:#1f1f1f;">Dự toán</div><div class="t" style="left:1687.9px;top:679.3px;font-size:15px;color:#1f1f1f;">Thực chi</div><svg style="position:absolute;left:1839px;top:678px" width="18" height="18" viewBox="0 0 18 18" fill="none" stroke="#6e6e6e" stroke-width="1.1"><circle cx="9" cy="8.6" r="7.5"/><path d="M9 5.2v6.7M5.6 8.6h6.8"/></svg><svg style="position:absolute;left:1869px;top:678px" width="18" height="19" viewBox="0 0 18 19" fill="none" stroke="#6e6e6e" stroke-width="1.15" stroke-linejoin="round" stroke-linecap="round"><path d="M1.1 4.5H16.9M5.2 4.5V2.2a1 1 0 0 1 1-1H11.8a1 1 0 0 1 1 1V4.5M3.3 6.9L4.2 15.8a.8.8 0 0 0 .8.7H13a.8.8 0 0 0 .8-.7L14.5 6.9"/><path d="M7.5 8.6V13.6M10.4 8.6V13.6"/></svg><div class="t" style="left:29.8px;top:717.0px;font-size:15px;color:#1f1f1f;">Tổng số: <b>2</b> bản ghi</div><div style="position:absolute;left:18px;top:742px;width:1886px;height:1px;background:#c9cad3"></div><div style="position:absolute;left:18px;top:743px;width:1068px;height:8px;background:#b9bdc6"></div><div style="position:absolute;left:23px;top:827px;width:87px;height:35px;border:1px solid #fff;border-radius:5px;box-sizing:border-box"></div><div class="t" style="left:48.0px;top:838.1px;font-size:14px;font-weight:bold;color:#fff;">Đóng</div><svg style="position:absolute;left:642px;top:833px" width="25" height="24" viewBox="0 0 25 24" fill="none" stroke="#adaeb5" stroke-width="1.6" stroke-linecap="round"><path d="M21 12a9 9 0 1 1-3-6.7"/><path d="M18.5 1.5v4.5H14"/></svg><div class="t" style="left:674.7px;top:838.1px;font-size:14px;font-weight:bold;color:#adaeb5;">Nạp</div><div style="position:absolute;left:727px;top:836px;width:2px;height:17px;background:#5f616d"></div><div style="position:absolute;left:884px;top:836px;width:2px;height:17px;background:#5f616d"></div><div style="position:absolute;left:997px;top:836px;width:2px;height:17px;background:#5f616d"></div><div style="position:absolute;left:1112px;top:836px;width:2px;height:17px;background:#5f616d"></div><svg style="position:absolute;left:752px;top:833px" width="24" height="24" viewBox="0 0 24 24" fill="none" stroke="#fff" stroke-width="1.6"><circle cx="12.2" cy="12.6" r="9.9"/><circle cx="12.2" cy="9" r="0.95" fill="#fff" stroke="none"/><circle cx="12.2" cy="12.4" r="0.95" fill="#fff" stroke="none"/><circle cx="12.2" cy="15.8" r="0.95" fill="#fff" stroke="none"/></svg><div class="t" style="left:784.5px;top:838.1px;font-size:14px;font-weight:bold;color:#fff;">Tiện ích</div><div style="position:absolute;left:849.5px;top:841px;width:0;height:0;border-left:4.5px solid transparent;border-right:4.5px solid transparent;border-top:6px solid #fff"></div><svg style="position:absolute;left:908px;top:833px" width="24" height="24" viewBox="0 0 24 24" fill="none" stroke="#80828c" stroke-width="1.6" stroke-linejoin="round"><path d="M6 7V2h12v5"/><rect x="1.8" y="7" width="20.4" height="10" rx="2"/><rect x="6" y="13.5" width="12" height="8.5" rx="1"/></svg><div class="t" style="left:939.3px;top:838.1px;font-size:14px;font-weight:bold;color:#80828c;">In</div><div style="position:absolute;left:970.5px;top:841px;width:0;height:0;border-left:4.5px solid transparent;border-right:4.5px solid transparent;border-top:6px solid #80828c"></div><svg style="position:absolute;left:1016px;top:833px" width="21" height="24" viewBox="0 0 21 24" fill="none" stroke="#c6c7cc" stroke-width="1.6" stroke-linejoin="round"><path d="M3 1.5h9.5l6 6v13.5a1.5 1.5 0 0 1-1.5 1.5H3a1.5 1.5 0 0 1-1.5-1.5V3A1.5 1.5 0 0 1 3 1.5z"/><path d="M12 1.5v6h6.5M5.5 10h3.5M5.5 13.5h9M5.5 17h9"/></svg><div class="t" style="left:1046.4px;top:838.1px;font-size:14px;font-weight:bold;color:#c6c7cc;">Duyệt</div><svg style="position:absolute;left:1130px;top:833px" width="23" height="24" viewBox="0 0 23 24" fill="none" stroke="#c6c7cc" stroke-width="1.6" stroke-linejoin="round"><path d="M1 5h21M7.5 5V1.8h8V5M3.5 5l1.8 17h12.4L19.5 5M9.5 9.5v8.5M13.5 9.5v8.5"/></svg><div class="t" style="left:1162.6px;top:838.1px;font-size:14px;font-weight:bold;color:#c6c7cc;">Xóa</div><div style="position:absolute;left:1707px;top:827px;width:87px;height:35px;border:1px solid #fff;border-radius:5px;box-sizing:border-box"></div><div class="t" style="left:1732.0px;top:838.1px;font-size:14px;font-weight:bold;color:#fff;">Hoãn</div><div style="position:absolute;left:1812px;top:828px;width:87px;height:33px;background:#5b5fea"></div><div class="t" style="left:1843.0px;top:838.1px;font-size:14px;font-weight:bold;color:#fff;">Cất</div><div style="position:absolute;left:1920px;top:400px;width:2px;height:17px;background:#000"></div><div style="position:absolute;left:1921px;top:402px;width:1px;height:14px;background:#fff"></div><div style="position:absolute;left:378px;top:343px;width:603px;height:118px;border:3px solid #f73b3e;box-sizing:border-box"></div><div style="position:absolute;left:1682px;top:343px;width:135px;height:111px;border:3px solid #f73b3e;box-sizing:border-box"></div><div style="position:absolute;left:1641px;top:546px;width:272px;height:53px;border:3px solid #f73b3e;box-sizing:border-box"></div><div style="position:absolute;left:1813px;top:825px;width:88px;height:40px;border:3px solid #f73b3e;box-sizing:border-box"></div><div style="position:absolute;left:669px;top:284px;width:40px;height:40px;border-radius:50%;background:#fd4343"></div><svg style="position:absolute;left:669px;top:284px" width="40" height="40" viewBox="-20 -20 40 40"><path d="M-0.2 -10 H3 V11 H-0.2 V-5.8 L-4.8 -2.4 L-5.6 -4.9 Z" fill="#fff"/></svg><div style="position:absolute;left:1712px;top:284px;width:40px;height:40px;border-radius:50%;background:#fd4343"></div><div class="t" style="left:1712px;top:284px;width:40px;height:40px;line-height:42px;text-align:center;font-size:30px;color:#fff">2</div><div style="position:absolute;left:1583.5px;top:546px;width:40px;height:40px;border-radius:50%;background:#fd4343"></div><div class="t" style="left:1583.5px;top:546px;width:40px;height:40px;line-height:42px;text-align:center;font-size:30px;color:#fff">3</div><div style="position:absolute;left:1817px;top:772px;width:40px;height:40px;border-radius:50%;background:#fd4343"></div><div class="t" style="left:1817px;top:772px;width:40px;height:40px;line-height:42px;text-align:center;font-size:30px;color:#fff">4</div>
</body></html>
